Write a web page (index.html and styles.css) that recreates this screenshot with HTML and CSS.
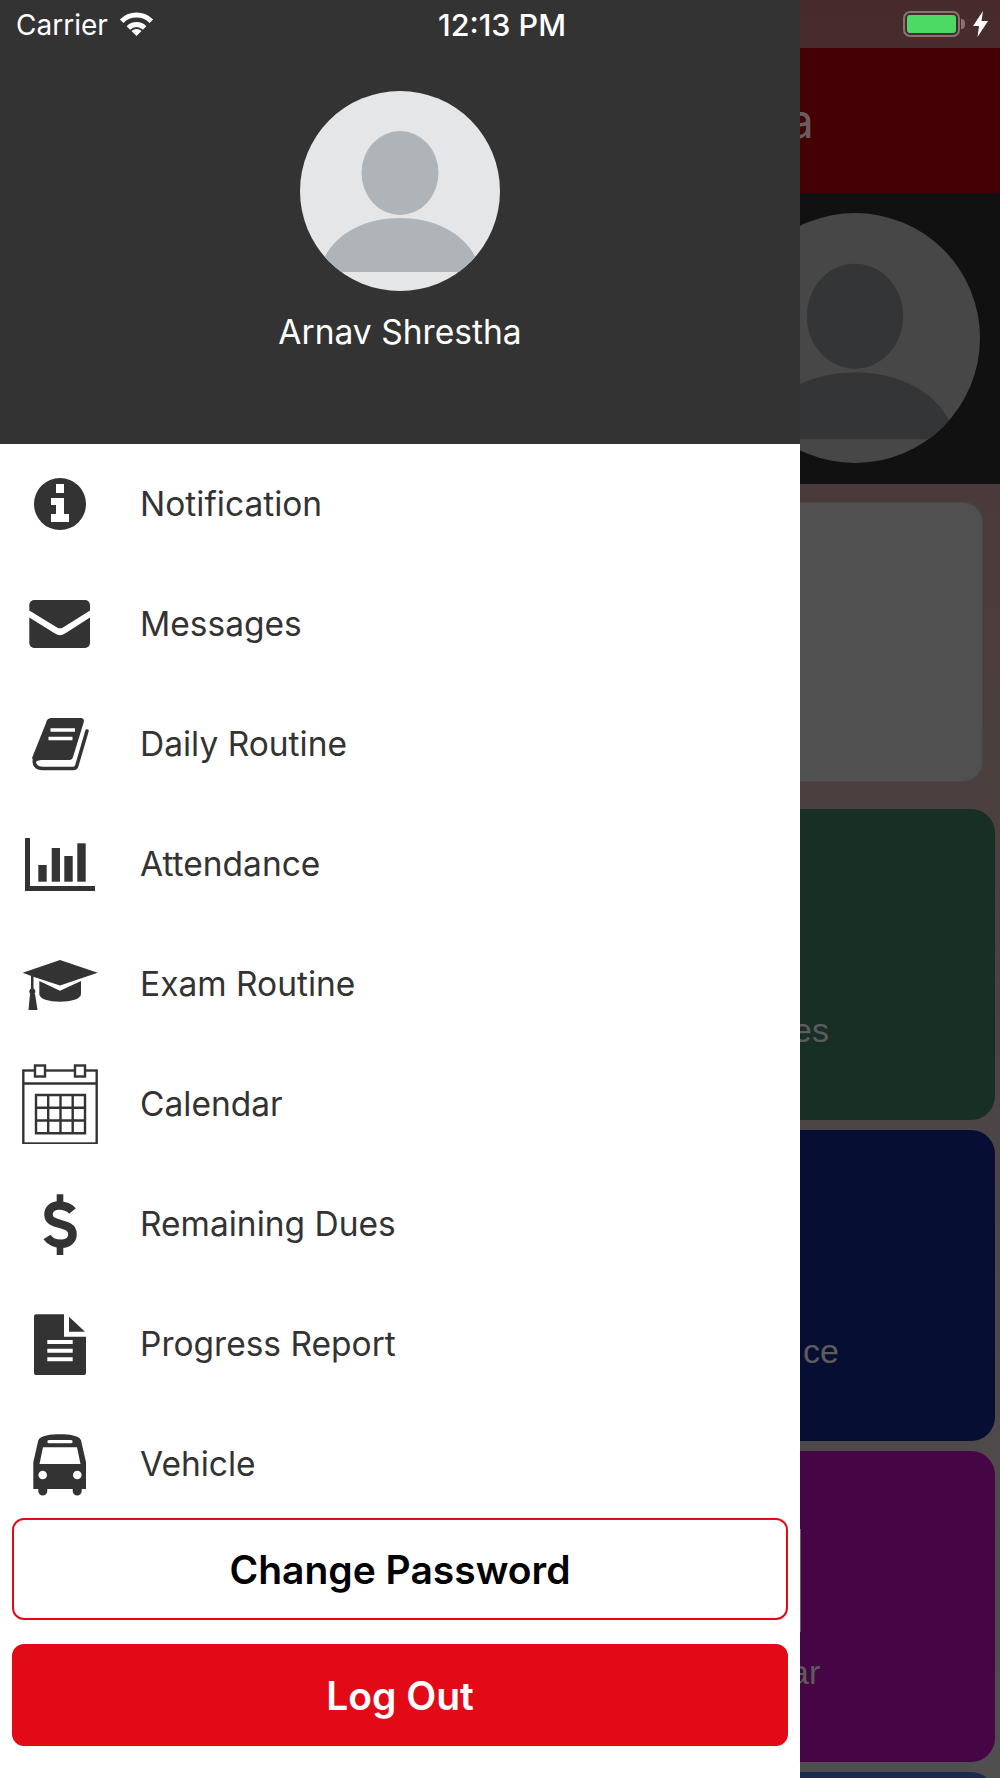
FILE: index.html
```html
<!DOCTYPE html>
<html lang="en">
<head>
  <meta charset="UTF-8" />
  <title>School App</title>
  <meta name="viewport" content="width=device-width, initial-scale=1.0" />
  <link rel="stylesheet" href="styles.css">
</head>
<body>
  <div class="screen">
    <!-- side menu -->
    <div class="drawer">
      <div class="drawer-head">
        <div class="status-row">
          <span class="carrier">Carrier</span>
          <svg class="wifi" viewBox="0 0 35 25">
            <path d="M17.5 24 L12.5 19 A7 7 0 0 1 22.5 19 Z" fill="#fff"/>
            <path d="M9.4 15.9 A11.5 11.5 0 0 1 25.6 15.9" fill="none" stroke="#fff" stroke-width="5"/>
            <path d="M2.65 9.15 A21 21 0 0 1 32.35 9.15" fill="none" stroke="#fff" stroke-width="5"/>
          </svg>
          <span class="clock">12:13 PM</span>
        </div>
        <svg class="avatar" viewBox="0 0 200 200">
          <defs>
            <clipPath id="avatarClip"><circle cx="100" cy="100" r="100"/></clipPath>
          </defs>
          <circle cx="100" cy="100" r="100" fill="#e4e6e8"/>
          <g clip-path="url(#avatarClip)" fill="#afb4b8">
            <ellipse cx="100" cy="82" rx="38.5" ry="42"/>
            <path d="M20 181 C25 150 57 127 100 127 C143 127 175 150 180 181 Z"/>
          </g>
        </svg>
        <div class="user-name">Arnav Shrestha</div>
      </div>

      <ul class="menu">
        <li class="menu-item">
          <svg class="menu-icon" viewBox="0 0 80 80">
            <path fill-rule="evenodd" d="M40 14a26 26 0 1 1 0 52a26 26 0 0 1 0-52z M36 20v9h8v-9z M31 34v7h5v9h-5v8h18v-8h-5V34z"/>
          </svg>
          <span>Notification</span>
        </li>
        <li class="menu-item">
          <svg class="menu-icon" viewBox="0 0 80 80">
            <path d="M14 16h51a5 5 0 0 1 5 5v5.5L43 43.5a6 6 0 0 1-6 0L9.3 26.5V21a5 5 0 0 1 5-5z"/>
            <path d="M9.3 33.5L35 49.5a9 9 0 0 0 10 0L70 33.5V59a5 5 0 0 1-5 5H14a5 5 0 0 1-4.7-5z"/>
          </svg>
          <span>Messages</span>
        </li>
        <li class="menu-item">
          <svg class="menu-icon" viewBox="0 0 80 80">
            <path d="M32 14H61a3 3 0 0 1 2.800 4L53 53a4 4 0 0 1-4 3H24c-4 0-7 0-9 3L12 54L26 19a6 6 0 0 1 6-5z"/>
            <path d="M67 27L57 61a4 4 0 0 1-4 3.500H23c-7 0-9.500-4-8.500-9" fill="none" stroke="#333" stroke-width="3.500" stroke-linecap="round"/>
            <path d="M30.500 26H55M28.500 34.500H52.500" fill="none" stroke="#fff" stroke-width="3.500"/>
          </svg>
          <span>Daily Routine</span>
        </li>
        <li class="menu-item">
          <svg class="menu-icon" viewBox="0 0 80 80">
            <path d="M5 14h5v48h65v5H5z"/>
            <rect x="18.300" y="41" width="8.400" height="16.700"/>
            <rect x="31.700" y="24" width="8.300" height="33.700"/>
            <rect x="44.300" y="32" width="8.400" height="25.700"/>
            <rect x="57.300" y="19.300" width="8.400" height="38.400"/>
          </svg>
          <span>Attendance</span>
        </li>
        <li class="menu-item">
          <svg class="menu-icon" viewBox="0 0 80 80">
            <path d="M2.700 28.700L40 16L77.700 28.700L40 41.500L14 33z"/>
            <path d="M19.300 37L40 46.700L61 37V50c0 5-10 7.700-21 7.700S19.300 55 19.300 50z"/>
            <path d="M11 32h2.500v14H11z"/>
            <circle cx="12.300" cy="47.500" r="3"/>
            <path d="M10 50h5l2.500 16h-9z"/>
          </svg>
          <span>Exam Routine</span>
        </li>
        <li class="menu-item">
          <svg class="menu-icon" viewBox="0 0 80 80">
            <g fill="none" stroke="#333" stroke-width="2.400">
              <rect x="3.300" y="6.500" width="73.400" height="73"/>
              <path d="M3.300 19.500H76.700"/>
              <rect x="15" y="1.500" width="10" height="11" fill="#fff"/>
              <rect x="55" y="1.500" width="10" height="11" fill="#fff"/>
              <path d="M16 31H65V69.300H16z M28.200 31V69.300 M40.500 31V69.300 M52.700 31V69.300 M16 43.800H65 M16 56.500H65"/>
            </g>
          </svg>
          <span>Calendar</span>
        </li>
        <li class="menu-item">
          <svg class="menu-icon" viewBox="0 0 80 80">
            <path d="M36.700 10.300h6.600v8h-6.600z M36.700 63h6.600v8h-6.600z"/>
            <path d="M52.500 27C47 20 28 18 28.500 31C29 43 52.500 37 52.500 50C52.500 63 33 62 27 53" fill="none" stroke="#333" stroke-width="8.500"/>
          </svg>
          <span>Remaining Dues</span>
        </li>
        <li class="menu-item">
          <svg class="menu-icon" viewBox="0 0 80 80">
            <path fill-rule="evenodd" d="M16 10.300H44V32.700H66V69a2 2 0 0 1-2 2H16a2 2 0 0 1-2-2V12.300a2 2 0 0 1 2-2z M27.300 36v4H52.700v-4z M27.300 44.800v4H52.700v-4z M27.300 53.300v4H52.700v-4z"/>
            <path d="M49 12.700L65 27.700H49z"/>
          </svg>
          <span>Progress Report</span>
        </li>
        <li class="menu-item">
          <svg class="menu-icon" viewBox="0 0 80 80">
            <path fill-rule="evenodd" d="M40 10.300c9 0 19 1 21 6l5 22V65H61.700v2a4.500 4.500 0 0 1-9 0V65H27.300v2a4.500 4.500 0 0 1-9 0V65H13.300V38.300l5-22c2-5 12.700-6 21.700-6z M29 16a1.600 1.600 0 0 0 0 3.300H51a1.600 1.600 0 0 0 0-3.300z M23 23.300L19.500 40H60.500L57 23.300z M22.700 46.700a4.300 4.300 0 1 0 0 8.600a4.300 4.300 0 0 0 0-8.600z M57.300 46.700a4.300 4.300 0 1 0 0 8.600a4.300 4.300 0 0 0 0-8.600z"/>
          </svg>
          <span>Vehicle</span>
        </li>
      </ul>

      <div class="drawer-actions">
        <button class="btn btn-outline">Change Password</button>
        <button class="btn btn-solid">Log Out</button>
      </div>
    </div>

    <!-- home screen dimmed behind the menu -->
    <div class="home">
      <div class="home-status">
        <div class="battery"><div class="battery-level"></div></div>
        <div class="battery-tip"></div>
        <svg class="bolt" viewBox="0 0 15 26">
          <path d="M10 0L0 15H6L4.500 26L15 10H8.500z" fill="#fff"/>
        </svg>
      </div>
      <div class="home-title"><span>a</span></div>
      <div class="home-profile">
        <svg class="home-avatar" viewBox="0 0 200 200">
          <defs>
            <clipPath id="homeClip"><circle cx="100" cy="100" r="100"/></clipPath>
          </defs>
          <circle cx="100" cy="100" r="100" fill="#474747"/>
          <g clip-path="url(#homeClip)" fill="#343537">
            <ellipse cx="100" cy="82.500" rx="38.500" ry="42"/>
            <path d="M20 181 C25 150 57 127.500 100 127.500 C143 127.500 175 150 180 181 Z"/>
          </g>
        </svg>
      </div>
      <div class="card card-grey"></div>
      <div class="card card-green"><span class="card-label label-dues">es</span></div>
      <div class="card card-blue"><span class="card-label label-notice">ce</span></div>
      <div class="card card-purple"><span class="card-label label-cal">ar</span></div>
      <div class="card card-navy"></div>
    </div>
  </div>
</body>
</html>
```

FILE: styles.css
```css
:root {
  --dark: #333;
  --red: #e20a17;
}

* {
  box-sizing: border-box;
}

body {
  margin: 0;
  font-family: 'Inter', 'Liberation Sans', sans-serif;
  background: #fff;
}

.screen {
  display: flex;
  width: 1000px;
  height: 1778px;
  overflow: hidden;
}

/* === DRAWER === */
.drawer {
  display: flex;
  flex-direction: column;
  width: 800px;
  flex-shrink: 0;
  background: #fff;
}

.drawer-head {
  display: flex;
  flex-direction: column;
  align-items: center;
  height: 444px;
  background: var(--dark);
  color: #fff;
}

.status-row {
  display: flex;
  align-items: center;
  width: 100%;
  height: 48px;
  padding: 2px 234px 0 16px;
}

.carrier {
  font-size: 28px;
  line-height: 46px;
}

.wifi {
  width: 35px;
  height: 25px;
  margin-left: 11px;
  margin-top: -1px;
}

.clock {
  margin-left: auto;
  font-size: 30.5px;
  font-weight: 500;
  line-height: 46px;
}

.avatar {
  width: 200px;
  height: 200px;
  margin-top: 43px;
}

.user-name {
  margin-top: 20px;
  font-size: 33.6px;
  line-height: 42px;
}

.menu {
  height: 1074px;
  margin: 0;
  padding: 0;
  list-style: none;
  overflow: hidden;
}

.menu-item {
  display: flex;
  align-items: center;
  gap: 40px;
  height: 120px;
  padding-left: 20px;
  font-size: 33.5px;
  color: var(--dark);
}

.menu-icon {
  width: 80px;
  height: 80px;
  fill: var(--dark);
  flex-shrink: 0;
}

.drawer-actions {
  display: flex;
  flex-direction: column;
  gap: 24px;
  padding: 0 12px;
}

.btn {
  height: 102px;
  border-radius: 12px;
  font-family: inherit;
  font-size: 39px;
  font-weight: 600;
  border: 2px solid var(--red);
}

.btn-outline {
  background: #fff;
  color: #000;
}

.btn-solid {
  background: var(--red);
  color: #fff;
}

/* === HOME BEHIND DRAWER === */
.home {
  width: 200px;
  height: 100%;
  overflow: hidden;
  background: linear-gradient(#472a2c, #4a3a3b 27%, #4f4f4f);
}

.home-status {
  display: flex;
  align-items: center;
  height: 48px;
  padding-left: 103px;
}

.battery {
  width: 57px;
  height: 26px;
  padding: 2px;
  border: 2px solid #8a7274;
  border-radius: 7px;
}

.battery-level {
  height: 100%;
  background: #4cd964;
  border-radius: 3px;
}

.battery-tip {
  width: 4px;
  height: 10px;
  margin-left: 1px;
  background: #8a7274;
  border-radius: 0 4px 4px 0;
}

.bolt {
  width: 15px;
  height: 26px;
  margin-left: 8px;
}

.home-title {
  height: 145px;
  background: #450005;
  color: #6a5d5e;
  font-size: 48px;
  line-height: 145px;
}

.home-title span {
  display: block;
  margin-left: -13px;
}

.home-profile {
  height: 291px;
  padding-top: 20px;
  background: #111;
}

.home-avatar {
  display: block;
  width: 250px;
  height: 250px;
  margin-left: -70px;
}

.card {
  display: flex;
  align-items: flex-end;
  height: 311px;
  margin: 0 5px 10px 0;
  border-radius: 0 24px 24px 0;
  padding-bottom: 70px;
  font-family: 'Liberation Sans', sans-serif;
  font-size: 34px;
  line-height: 40px;
  color: #5c5c5c;
}

.card-grey {
  height: 280px;
  margin: 18px 17px 27px 0;
  background: #505050;
  border: 1px solid #484848;
  border-left: 0;
  border-radius: 0 20px 20px 0;
}

.card-green {
  background: #172f24;
}

.card-blue {
  background: #060f33;
}

.card-purple {
  position: relative;
  background: #460645;
}

/* faint edge of a control sitting under the drawer */
.card-purple::before {
  content: "";
  position: absolute;
  left: 0;
  top: 78px;
  width: 1px;
  height: 103px;
  background: #6a5a68;
}

.card-navy {
  background: #1b2a4f;
}

.label-dues {
  margin-left: -7px;
}

.label-notice {
  margin-left: 3px;
}

.label-cal {
  margin-left: -10px;
}
```
